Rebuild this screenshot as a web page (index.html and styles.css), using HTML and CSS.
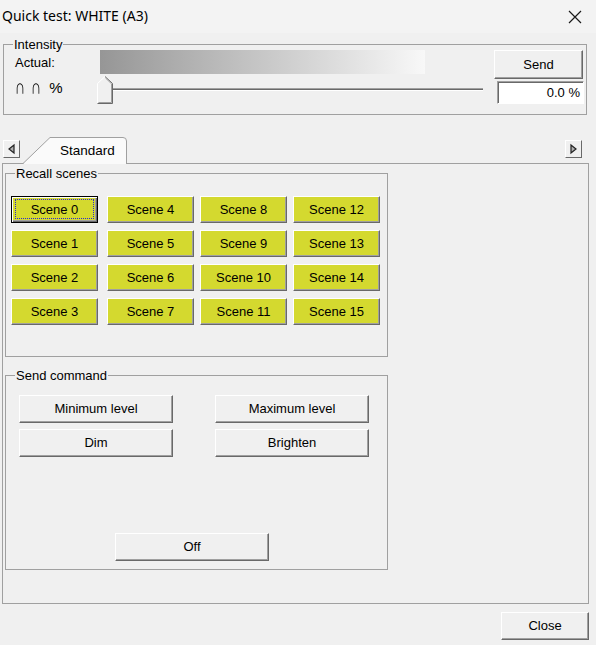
FILE: index.html
```html
<!DOCTYPE html>
<html>
<head>
<meta charset="utf-8">
<title>Quick test</title>
<link rel="stylesheet" href="styles.css">
</head>
<body>
<div class="window">
  <div class="titlebar">
    <span class="title">Quick test: WHITE (A3)</span>
    <svg class="close-x" width="14" height="14" viewBox="0 0 14 14"><path d="M1 1 L13 13 M13 1 L1 13" stroke="#1a1a1a" stroke-width="1.2" fill="none"/></svg>
  </div>

  <div class="group intensity">
    <span class="legend">Intensity</span>
    <div class="int-grid">
      <div class="lbl">Actual:</div>
      <div class="gauge"></div>
      <button class="btn send">Send</button>
      <div class="lbl sym"><span class="cap">∩</span><span class="cap">∩</span><span class="pct">%</span></div>
      <div class="slider">
        <div class="track"></div>
        <svg class="thumb" width="16" height="28" viewBox="0 0 16 28">
          <polygon points="0.5,7.5 8,0.5 15.5,7.5 15.5,27.5 0.5,27.5" fill="#f0f0f0"/>
          <path d="M0.5 27 L0.5 7.5 L8 0.5" stroke="#ffffff" fill="none"/>
          <path d="M8 0.5 L15.5 7.5 L15.5 27.5 L0.5 27.5" stroke="#696969" fill="none"/>
          <path d="M8.5 2 L14.5 7.8 L14.5 26.5 L1.5 26.5" stroke="#a0a0a0" fill="none"/>
        </svg>
      </div>
      <div class="field">0.0 %</div>
    </div>
  </div>

  <div class="tabrow">
    <div class="arrow left">
      <svg width="17" height="18" viewBox="0 0 17 18"><polygon points="6,9 11,5 11,13" fill="#b0b0b0" stroke="#222" stroke-width="1.2"/></svg>
    </div>
    <div class="tab">
      <svg class="tab-shape" width="104" height="27" viewBox="0 0 104 27">
        <path d="M0 27 L27 0.5 L100 0.5 Q103.5 0.5 103.5 4 L103.5 27 Z" fill="#fafafa"/>
        <path d="M0 26.5 L27 0.5 L100 0.5 Q103.5 0.5 103.5 4 L103.5 27" stroke="#a0a0a0" fill="none"/>
      </svg>
      <span class="tab-label">Standard</span>
    </div>
    <div class="arrow right">
      <svg width="17" height="18" viewBox="0 0 17 18"><polygon points="11,9 6,5 6,13" fill="#b0b0b0" stroke="#222" stroke-width="1.2"/></svg>
    </div>
  </div>

  <div class="panel">
    <div class="group recall">
      <span class="legend">Recall scenes</span>
      <div class="scene-grid">
        <button class="btn scene default"><span>Scene 0</span></button>
        <button class="btn scene">Scene 1</button>
        <button class="btn scene">Scene 2</button>
        <button class="btn scene">Scene 3</button>
        <button class="btn scene">Scene 4</button>
        <button class="btn scene">Scene 5</button>
        <button class="btn scene">Scene 6</button>
        <button class="btn scene">Scene 7</button>
        <button class="btn scene">Scene 8</button>
        <button class="btn scene">Scene 9</button>
        <button class="btn scene">Scene 10</button>
        <button class="btn scene">Scene 11</button>
        <button class="btn scene">Scene 12</button>
        <button class="btn scene">Scene 13</button>
        <button class="btn scene">Scene 14</button>
        <button class="btn scene">Scene 15</button>
      </div>
    </div>
    <div class="group command">
      <span class="legend">Send command</span>
      <div class="cmd-grid">
        <button class="btn big">Minimum level</button>
        <button class="btn big">Maximum level</button>
        <button class="btn big">Dim</button>
        <button class="btn big">Brighten</button>
      </div>
      <button class="btn big off">Off</button>
    </div>
  </div>

  <div class="footer">
    <button class="btn closebtn">Close</button>
  </div>
</div>
</body>
</html>
```

FILE: styles.css
```css
html, body {
  margin: 0;
  padding: 0;
}
body {
  width: 596px;
  height: 645px;
  background: #f0f0f0;
  font-family: "Liberation Sans", Arial, sans-serif;
  font-size: 13px;
  color: #000;
  overflow: hidden;
}
.window {
  width: 596px;
  height: 645px;
}
.titlebar {
  height: 33px;
  background: #f3f3f3;
  display: flex;
  align-items: center;
  padding-left: 2px;
  box-sizing: border-box;
}
.title {
  font-family: "Noto Sans", "Open Sans", sans-serif;
  font-size: 14px;
  color: #000;
  line-height: 20px;
  margin-top: -1px;
}
.close-x {
  margin-left: auto;
  margin-right: 14px;
}

.group {
  position: relative;
  border: 1px solid #a0a0a0;
  box-sizing: border-box;
}
.legend {
  position: absolute;
  top: -8px;
  left: 9px;
  padding: 0 1px;
  line-height: 15px;
  background: #f0f0f0;
}

.intensity {
  margin: 11px 0 0 3px;
  width: 584px;
  height: 71px;
}
.int-grid {
  display: grid;
  padding: 5px 0 0 11px;
  grid-template-columns: 85px 394px 89px;
  grid-template-rows: 26px 28px;
}
.lbl {
  height: 24px;
  display: flex;
  align-items: center;
}
.sym {
  font-family: "Liberation Sans", "DejaVu Sans", sans-serif;
  font-size: 14px;
  color: #000;
  align-items: flex-end;
  height: 19px;
}
.cap {
  display: inline-block;
  line-height: 12px;
  transform: scale(1.05, 1.5);
  transform-origin: 50% 100%;
  will-change: transform;
  margin-right: 6px;
}
.pct {
  font-size: 15px;
  line-height: 14px;
  margin-left: 2px;
}
.gauge {
  width: 325px;
  height: 24px;
  background: linear-gradient(to right, #969696, #f8f8f8);
}
.slider {
  position: relative;
  margin-left: -3px;
  width: 387px;
  height: 28px;
}
.track {
  margin: 12px 0 0 3px;
  width: 383px;
  height: 1px;
  background: #696969;
  border-top: 1px solid #a0a0a0;
  border-bottom: 1px solid #ffffff;
}
.thumb {
  position: absolute;
  left: 0;
  top: 0;
}
.field {
  margin: 5px 0 0 3px;
  width: 87px;
  height: 23px;
  box-sizing: border-box;
  background: #fff;
  border: 1px solid;
  border-color: #a0a0a0 #ffffff #ffffff #a0a0a0;
  box-shadow: inset 1px 1px 0 #696969;
  text-align: right;
  padding-right: 3px;
  line-height: 21px;
}

.btn {
  font-family: "Liberation Sans", Arial, sans-serif;
  font-size: 13px;
  color: #000;
  padding: 0;
  margin: 0;
  background: #f0f0f0;
  border: 1px solid;
  border-color: #ffffff #696969 #696969 #ffffff;
  box-shadow: inset -1px -1px 0 #a0a0a0;
  box-sizing: border-box;
  line-height: 16px;
}
.send {
  width: 89px;
  height: 29px;
}

.tabrow {
  margin-top: 22px;
  height: 26px;
  display: flex;
  align-items: flex-start;
}
.arrow {
  width: 17px;
  height: 18px;
  margin-top: 3px;
  box-sizing: border-box;
  background: #f0f0f0;
  border: 1px solid;
  border-color: #ffffff #696969 #696969 #ffffff;
}
.arrow svg {
  display: block;
  margin: -1px 0 0 -1px;
}
.arrow.left {
  margin-left: 3px;
}
.arrow.right {
  margin-left: auto;
  margin-right: 14px;
}
.tab {
  position: relative;
  z-index: 1;
  margin-left: 3px;
  width: 104px;
  height: 27px;
}
.tab-shape {
  position: absolute;
  left: 0;
  top: 0;
}
.tab-label {
  position: relative;
  display: block;
  padding-left: 37px;
  line-height: 27px;
  font-size: 13.5px;
}

.panel {
  margin-left: 2px;
  width: 587px;
  height: 441px;
  border: 1px solid #a0a0a0;
  box-sizing: border-box;
}
.recall {
  margin: 9px 0 0 2px;
  width: 383px;
  height: 184px;
}
.scene-grid {
  display: grid;
  padding: 22px 0 0 5px;
  grid-template-columns: 96px 93px 93px 87px;
  grid-template-rows: repeat(4, 27px);
  grid-auto-flow: column;
  row-gap: 7px;
}
.scene {
  width: 87px;
  height: 27px;
  background: #d4d92f;
}
.default {
  position: relative;
  border-color: #000;
  box-shadow: inset 1px 1px 0 #ffffff, inset -1px -1px 0 #696969, inset -2px -2px 0 #a0a0a0;
}
.default::after {
  content: "";
  position: absolute;
  left: 3px;
  top: 2px;
  right: 3px;
  bottom: 3px;
  border: 1px dotted #2a2ad0;
}

.command {
  margin: 18px 0 0 2px;
  width: 383px;
  height: 195px;
}
.cmd-grid {
  display: grid;
  padding: 19px 0 0 13px;
  grid-template-columns: 196px 154px;
  grid-template-rows: 28px 28px;
  row-gap: 6px;
}
.big {
  width: 154px;
  height: 28px;
}
.off {
  display: block;
  margin: 76px 0 0 109px;
}

.footer {
  display: flex;
  justify-content: flex-end;
  padding: 8px 7px 0 0;
}
.closebtn {
  width: 88px;
  height: 28px;
}
```
